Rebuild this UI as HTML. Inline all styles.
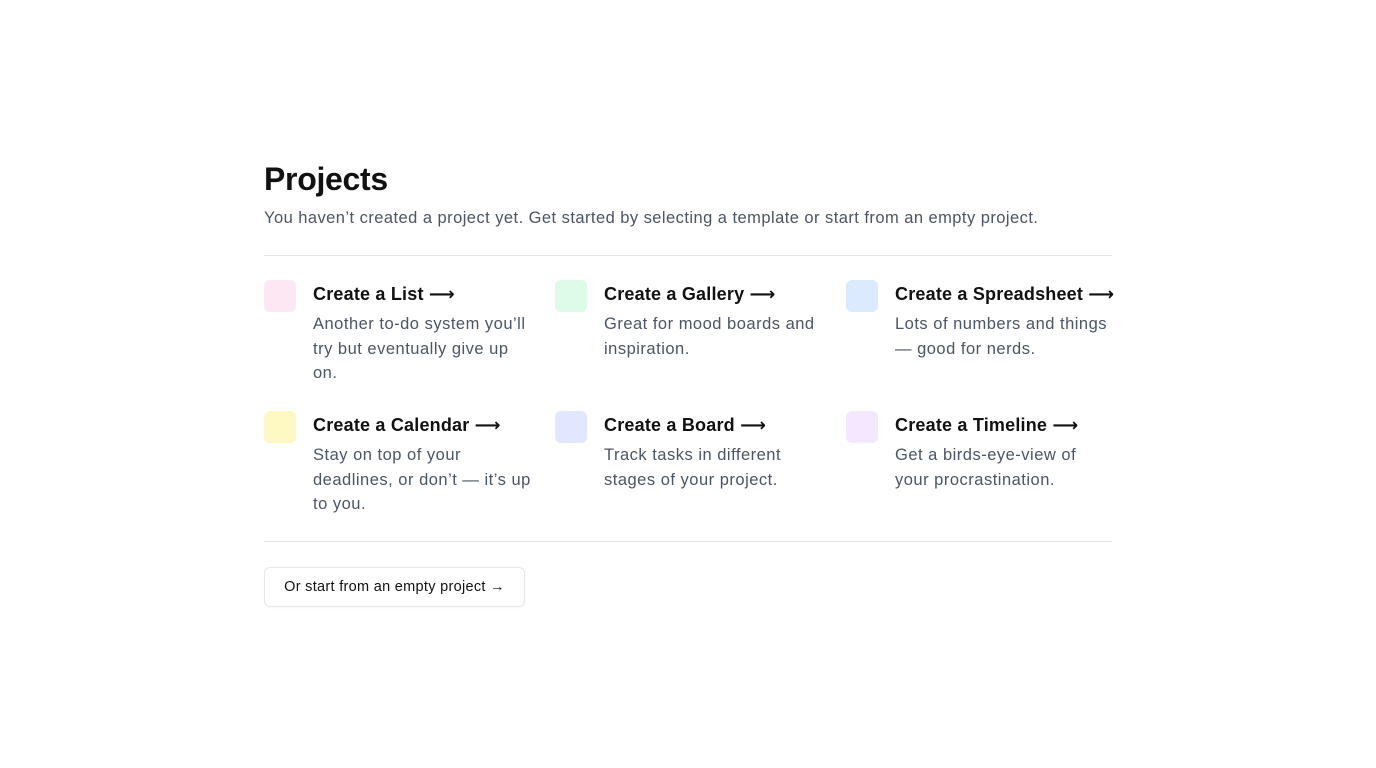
<!DOCTYPE html>
<html><head><style>
body{margin:0;background:#fff;font-family:"Liberation Sans",Arial,sans-serif;}
.wrap{position:absolute;left:264px;top:0;width:848px;}
h1{position:absolute;top:160px;left:0;margin:0;font-size:32px;font-weight:700;color:#111;letter-spacing:-0.3px;line-height:38px}
.sub{position:absolute;top:207px;left:0;font-size:16.5px;color:#4b5563;letter-spacing:0.45px;line-height:22px;white-space:nowrap}
.hr{position:absolute;left:0;width:848px;height:1px;background:#e5e7eb}
.item{position:absolute;width:291px}
.sq{position:absolute;left:0;top:0;width:32px;height:32px;border-radius:6px}
.t{position:absolute;left:49px;top:2px;font-size:18px;font-weight:700;color:#111;white-space:nowrap;line-height:24px;letter-spacing:0.2px}
.a{font-family:"DejaVu Sans",sans-serif;font-weight:700;letter-spacing:0}
.d{position:absolute;left:49px;top:32px;width:240px;white-space:nowrap;font-size:16.5px;color:#4b5563;line-height:24.5px;letter-spacing:0.5px}
.btn{position:absolute;left:0;top:567px;width:259px;height:38px;border:1px solid #e5e7eb;border-radius:6px;font-size:14.5px;color:#111;line-height:38px;text-align:center;letter-spacing:0.3px;box-shadow:0 1px 2px rgba(0,0,0,0.04)}
</style></head><body>
<div class="wrap">
<h1>Projects</h1>
<div class="sub">You haven’t created a project yet. Get started by selecting a template or start from an empty project.</div>
<div class="hr" style="top:255px"></div>
<div class="item" style="left:0;top:280px"><div class="sq" style="background:#fce7f3"></div><div class="t">Create a List <span class="a">⟶</span></div><div class="d">Another to-do system you’ll<br>try but eventually give up<br>on.</div></div>
<div class="item" style="left:291px;top:280px"><div class="sq" style="background:#dcfce7"></div><div class="t">Create a Gallery <span class="a">⟶</span></div><div class="d">Great for mood boards and<br>inspiration.</div></div>
<div class="item" style="left:582px;top:280px"><div class="sq" style="background:#dbeafe"></div><div class="t">Create a Spreadsheet <span class="a">⟶</span></div><div class="d">Lots of numbers and things<br>— good for nerds.</div></div>
<div class="item" style="left:0;top:411px"><div class="sq" style="background:#fef9c3"></div><div class="t">Create a Calendar <span class="a">⟶</span></div><div class="d">Stay on top of your<br>deadlines, or don’t — it’s up<br>to you.</div></div>
<div class="item" style="left:291px;top:411px"><div class="sq" style="background:#e0e7ff"></div><div class="t">Create a Board <span class="a">⟶</span></div><div class="d">Track tasks in different<br>stages of your project.</div></div>
<div class="item" style="left:582px;top:411px"><div class="sq" style="background:#f3e8ff"></div><div class="t">Create a Timeline <span class="a">⟶</span></div><div class="d">Get a birds-eye-view of<br>your procrastination.</div></div>
<div class="hr" style="top:541px"></div>
<div class="btn">Or start from an empty project →</div>
</div>
</body></html>
